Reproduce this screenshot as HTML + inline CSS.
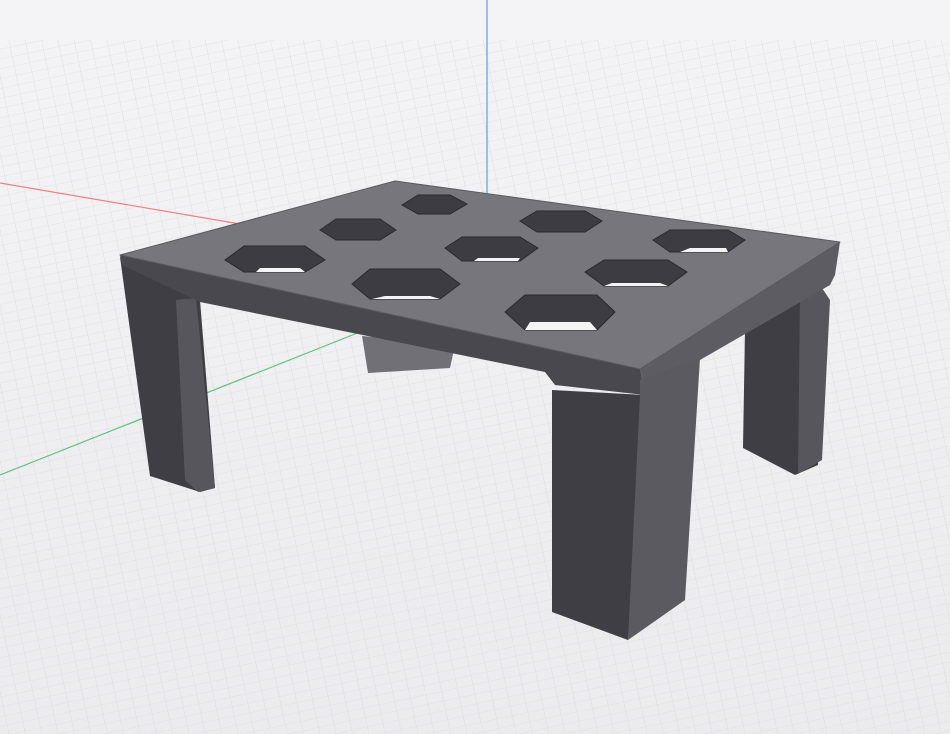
<!DOCTYPE html>
<html><head><style>
html,body{margin:0;padding:0;width:950px;height:734px;overflow:hidden;background:#efeff1}
</style></head><body>
<svg width="950" height="734" viewBox="0 0 950 734" xmlns="http://www.w3.org/2000/svg">
<defs>
<linearGradient id="bg" x1="0" y1="0" x2="0" y2="1">
<stop offset="0" stop-color="#f4f4f6"/><stop offset="1" stop-color="#ebebee"/></linearGradient>
<pattern id="g1" width="16" height="16" patternUnits="userSpaceOnUse" patternTransform="rotate(-12) scale(1,0.6)">
<path d="M0 0H16M0 0V16" stroke="#d6d6dc" stroke-width="1" fill="none"/></pattern>
</defs>
<rect width="950" height="734" fill="url(#bg)"/>
<rect y="40" width="950" height="694" fill="url(#g1)" opacity="0.7"/>
<line x1="487" y1="0" x2="487" y2="260" stroke="#5a9ef0" stroke-width="1.2"/>
<line x1="0" y1="183" x2="240" y2="224" stroke="#f08080" stroke-width="1.2"/>
<line x1="0" y1="475" x2="365" y2="330" stroke="#60c080" stroke-width="1.2"/>
<polygon points="362,336 455,345 450,368 368,373" fill="#707076"/>
<polygon points="745,330 805,290 818,300 818,465 795,475 743,448" fill="#3e3e44"/>
<polygon points="800,295 820,285 830,300 822,460 798,474" fill="#56565c"/>
<polygon points="120,257 178,290 200,300 215,488 200,492 150,476" fill="#3e3e44"/>
<polygon points="176,300 196,298 215,488 198,492 185,480" fill="#56565c"/>
<polygon points="120,255 640,368 645,395 555,385 545,372 200,302 122,265" fill="#48484e"/>
<polygon points="640,368 840,242 835,275 830,285 700,360 690,378 645,395" fill="#5c5c62"/>
<polygon points="552,390 645,395 628,640 552,612" fill="#3e3e44"/>
<polygon points="640,380 700,358 685,600 628,640 640,395" fill="#5a5a60"/>
<polygon points="120,255 395,181 840,242 640,369" fill="#76767c" stroke="#5a5a60" stroke-width="1" stroke-linejoin="round"/>
<g fill="#3c3c42" stroke="#2a2a30" stroke-width="1">
<polygon points="402,205 418,195 450,195 467,204 450,214 418,214"/>
<polygon points="320,230 336,219 380,219 396,230 380,240 336,240"/>
<polygon points="225,260 244,246 305,246 325,260 305,272 244,272"/>
<polygon points="520,221 537,211 585,211 602,221 585,232 537,232"/>
<polygon points="445,248 462,237 520,237 538,248 520,261 462,261"/>
<polygon points="352,284 370,269 440,269 460,284 440,299 370,299"/>
<polygon points="653,240 670,230 728,230 745,240 728,252 670,252"/>
<polygon points="585,272 604,260 668,260 687,272 668,286 604,286"/>
<polygon points="505,312 525,295 597,295 615,312 597,330 525,330"/>
</g>
<g fill="#f4f4f6">
<polygon points="260,268 300,268 305,272 256,272"/>
<polygon points="478,258 520,258 518,261 474,261"/>
<polygon points="385,296 430,296 440,299 372,299"/>
<polygon points="612,283 660,283 668,286 604,286"/>
<polygon points="530,322 590,322 597,330 525,330"/>
<polygon points="690,248 726,248 728,252 680,252"/>
</g>
</svg>
</body></html>
